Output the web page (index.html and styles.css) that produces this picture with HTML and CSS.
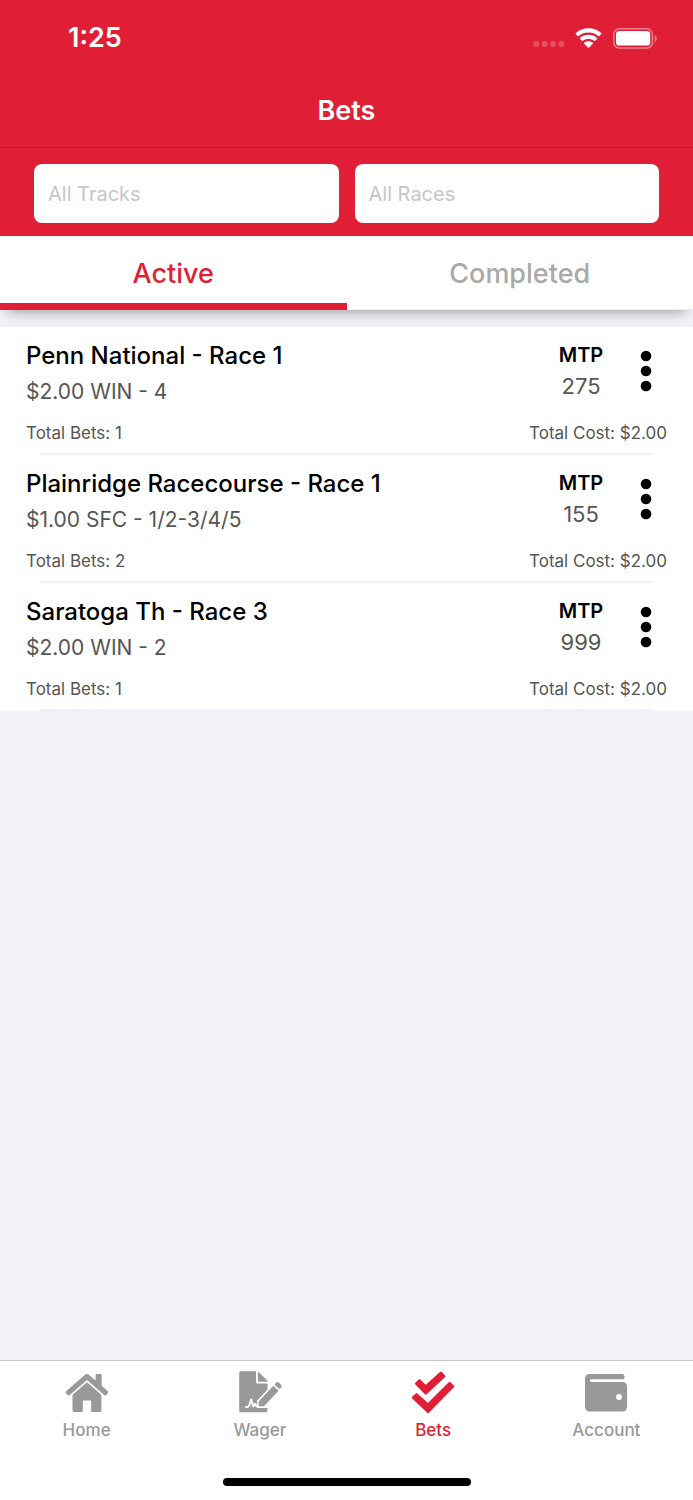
FILE: index.html
```html
<!DOCTYPE html>
<html lang="en">
<head>
<meta charset="utf-8">
<meta name="viewport" content="width=device-width, initial-scale=1">
<title>Bets</title>
<link rel="stylesheet" href="styles.css">
</head>
<body>
<header class="header">
  <div class="status">
    <time class="clock">1:25</time>
    <div class="indicators">
      <svg class="signal" width="32" height="6" viewBox="0 0 32 6" aria-hidden="true"><g fill="#fff" fill-opacity=".22"><rect x="0.500" width="5.500" height="6" rx="1.8"/><rect x="8.900" width="5.500" height="6" rx="1.8"/><rect x="17.300" width="5.500" height="6" rx="1.8"/><rect x="25.700" width="5.500" height="6" rx="1.8"/></g></svg>
      <svg class="wifi" width="27" height="20" viewBox="0 0 27 20" aria-hidden="true"><g fill="#fff"><path d="M13.500 0.300C8.600.300 4.100 2 .800 5a.7.7 0 0 0 0 1L2.800 7.900a.7.7 0 0 0 1 0C6.400 5.700 9.700 4.500 13.500 4.500s7.100 1.200 9.700 3.400a.7.7 0 0 0 1 0l2-1.900a.7.7 0 0 0 0-1C22.900 2 18.400.300 13.500.300z"/><path d="M13.500 6.700c-3.300 0-6.200 1.200-8.500 3.200a.7.7 0 0 0 0 1l1.900 1.900a.7.7 0 0 0 1 0c1.500-1.300 3.400-1.900 5.600-1.900s4.100.6 5.600 1.900a.7.7 0 0 0 1 0l1.900-1.900a.7.7 0 0 0 0-1c-2.300-2-5.200-3.200-8.500-3.200z"/><path d="M13.500 13.300c-1.700 0-3.200.5-4.400 1.500a.7.7 0 0 0 0 1l3.800 3.600c.4.400.8.400 1.200 0l3.800-3.600a.7.7 0 0 0 0-1c-1.200-1-2.700-1.500-4.400-1.500z"/></g></svg>
      <svg class="battery" width="44" height="21" viewBox="0 0 44 21" aria-hidden="true"><rect x=".8" y=".8" width="38.600" height="19.200" rx="5.500" fill="none" stroke="#fff" stroke-opacity=".45" stroke-width="1.500"/><rect x="3" y="3" width="34.200" height="14.600" rx="3.400" fill="#fff"/><path d="M41.800 7v7c2.600-1.300 2.600-5.700 0-7z" fill="#fff" fill-opacity=".5"/></svg>
    </div>
  </div>
  <h1 class="title">Bets</h1>
  <form class="filters">
    <input class="filter" type="text" placeholder="All Tracks" aria-label="Track">
    <input class="filter" type="text" placeholder="All Races" aria-label="Race">
  </form>
</header>
<div class="tabs" role="tablist">
  <button class="tab tab-active" type="button" role="tab" aria-selected="true">Active</button>
  <button class="tab" type="button" role="tab" aria-selected="false">Completed</button>
</div>
<main class="content">
  <ul class="bets">
    <li class="bet">
      <div class="bet-top">
        <div class="bet-info"><h2 class="race">Penn National - Race 1</h2><p class="wager">$2.00 WIN - 4</p></div>
        <div class="mtp"><span class="mtp-label">MTP</span><span class="mtp-value">275</span></div>
        <button class="more" type="button" aria-label="More options"><svg width="12" height="42" viewBox="0 0 12 42"><circle cx="6" cy="6" r="5.300"/><circle cx="6" cy="21" r="5.300"/><circle cx="6" cy="36" r="5.300"/></svg></button>
      </div>
      <div class="totals"><span>Total Bets: 1</span><span>Total Cost: $2.00</span></div>
    </li>
    <li class="bet">
      <div class="bet-top">
        <div class="bet-info"><h2 class="race">Plainridge Racecourse - Race 1</h2><p class="wager">$1.00 SFC - 1/2-3/4/5</p></div>
        <div class="mtp"><span class="mtp-label">MTP</span><span class="mtp-value">155</span></div>
        <button class="more" type="button" aria-label="More options"><svg width="12" height="42" viewBox="0 0 12 42"><circle cx="6" cy="6" r="5.300"/><circle cx="6" cy="21" r="5.300"/><circle cx="6" cy="36" r="5.300"/></svg></button>
      </div>
      <div class="totals"><span>Total Bets: 2</span><span>Total Cost: $2.00</span></div>
    </li>
    <li class="bet">
      <div class="bet-top">
        <div class="bet-info"><h2 class="race">Saratoga Th - Race 3</h2><p class="wager">$2.00 WIN - 2</p></div>
        <div class="mtp"><span class="mtp-label">MTP</span><span class="mtp-value">999</span></div>
        <button class="more" type="button" aria-label="More options"><svg width="12" height="42" viewBox="0 0 12 42"><circle cx="6" cy="6" r="5.300"/><circle cx="6" cy="21" r="5.300"/><circle cx="6" cy="36" r="5.300"/></svg></button>
      </div>
      <div class="totals"><span>Total Bets: 1</span><span>Total Cost: $2.00</span></div>
    </li>
  </ul>
</main>
<footer class="footer">
  <nav class="nav">
    <a class="nav-item" href="#home">
      <svg class="nav-icon" viewBox="0 0 44 44" aria-hidden="true"><path d="M20.300 3.600a2.500 2.500 0 0 1 3.200 0l7.100 6V4.300c0-.8.400-1.200 1.200-1.200h3.700c.8 0 1.200.4 1.200 1.200v10.400l6.100 5.500c.6.600.6 1.200.2 1.800l-1.900 2.200c-.5.500-1.100.5-1.700.1L22 8.900 4.400 24.300c-.6.500-1.200.4-1.700-.1L.9 22c-.5-.6-.4-1.300.2-1.800z"/><path d="M22 11.200l14.400 12.600v15.400c0 1.200-.7 1.900-1.900 1.900h-8.300V30.600c0-.7-.4-1.100-1.100-1.100h-6.200c-.7 0-1.100.4-1.100 1.100v10.500H9.400c-1.200 0-1.900-.7-1.900-1.900V23.800z"/></svg>
      <span>Home</span>
    </a>
    <a class="nav-item" href="#wager">
      <svg class="nav-icon" viewBox="0 0 44 44" aria-hidden="true"><path d="M3 .3h15v10.500c0 1.200.6 1.800 1.800 1.800h9.700v26.900c0 1.200-.6 1.800-1.800 1.800H3c-1.200 0-1.800-.6-1.800-1.800V2.100C1.200.9 1.800.3 3 .3z"/><path d="M19.900.3l9.600 9.500v.9h-9.600z"/><path d="M8 35.900h1.500c1 0 1.400-.5 1.700-1.400l1.900-6 2.200 7 1.700-2.700c.9 2.200 1.900 3.100 4 3.100h8.500" fill="none" stroke="#fff" stroke-width="2" stroke-linecap="round" stroke-linejoin="round"/><path d="M20.700 30.400l14.700-15.600 5.200 4.900L26 35.300h-5.300z" stroke="#fff" stroke-width="3.400" paint-order="stroke"/><path d="M36.400 13.600l1.800-1.900c.7-.8 1.700-.8 2.400-.1l2.500 2.400c.8.700.8 1.700.1 2.400l-1.700 1.900z"/></svg>
      <span>Wager</span>
    </a>
    <a class="nav-item nav-current" href="#bets" aria-current="page">
      <svg class="nav-icon" viewBox="0 0 44 44" aria-hidden="true"><g stroke="currentColor" stroke-width="2.400" stroke-linejoin="round"><path d="M5.200 12.700L8.500 9.400l6.300 6.100L30 1.700l3.300 3.500-18.500 17.200z"/><path d="M2 26.700l3.500-3.400L17 33.700 38.600 12l3.400 3.400L17 41z"/></g></svg>
      <span>Bets</span>
    </a>
    <a class="nav-item" href="#account">
      <svg class="nav-icon" viewBox="0 0 44 44" aria-hidden="true"><path fill-rule="evenodd" d="M5.500 3h32.500c1.500 0 2.500 1.200 2.500 2.800v.8c0 1-.5 1.600-1.400 1.600H7.400c-1 0-1.500.6-1.500 1.400s.5 1.400 1.500 1.400h31.300c2.600 0 4.400 1.900 4.400 4.400v20.500c0 2.600-1.800 4.500-4.400 4.500H5.500c-2.600 0-4.500-1.900-4.500-4.500V7.500C1 5 2.900 3 5.500 3zM35 23.100a2.900 2.900 0 1 0 0 5.800 2.900 2.900 0 0 0 0-5.800z"/></svg>
      <span>Account</span>
    </a>
  </nav>
  <div class="home-bar"></div>
</footer>
</body>
</html>
```
FILE: styles.css
```css
* { box-sizing: border-box; }
body {
  margin: 0;
  min-height: 100vh;
  display: flex;
  flex-direction: column;
  background: #f2f1f7;
  color: #000;
  font-family: Inter, "Liberation Sans", sans-serif;
}
h1, h2, p, ul { margin: 0; padding: 0; }
button, input { font: inherit; }
.header { background: #e01e35; color: #fff; }
.status {
  display: flex;
  justify-content: space-between;
  align-items: center;
  height: 76px;
  padding: 0 36px 0 68px;
}
.clock { font-size: 27px; font-weight: 600; line-height: 32px; }
.indicators { display: flex; align-items: center; gap: 10px; }
.signal { margin-top: 12px; }
.battery { margin-left: 1px; }
.title {
  height: 72px;
  border-bottom: 1px solid #c51d32;
  font-size: 27px;
  font-weight: 600;
  line-height: 70px;
  text-align: center;
}
.filters { display: flex; gap: 16px; padding: 16px 34px 13px; }
.filter {
  flex: 1;
  min-width: 0;
  height: 59px;
  padding: 0 14px;
  border: 0;
  border-radius: 8px;
  background: #fff;
  font-size: 20px;
}
.filter::placeholder { color: #c6c6c8; opacity: 1; }
.tabs {
  display: flex;
  position: relative;
  background: #fff;
  box-shadow: 0 10px 12px -8px rgba(0, 0, 0, .35);
}
.tab {
  flex: 1;
  height: 74px;
  padding: 2px 0 0;
  border: 0;
  border-bottom: 1px solid #ececf2;
  background: #fff;
  color: #a9a9a9;
  font-size: 27px;
  font-weight: 500;
}
.tab-active { border-bottom: 7px solid #e01e35; padding-top: 8px; color: #e01e35; }
.content { flex: 1; padding-top: 17px; }
.bets { list-style: none; background: #fff; }
.bet { padding: 12px 26px 0; }
.bet::after {
  content: "";
  display: block;
  height: 2px;
  margin: 4px 14px 0;
  background: #f2f1f7;
}
.bet-top { display: flex; align-items: flex-start; }
.bet-info { flex: 1; }
.race { font-size: 24px; font-weight: 500; line-height: 34px; }
.wager { color: #555; font-size: 21px; line-height: 38px; }
.mtp { display: flex; flex-direction: column; align-items: center; width: 60px; }
.mtp-label { font-size: 20px; font-weight: 600; line-height: 32px; }
.mtp-value { color: #555; font-size: 22px; line-height: 30px; }
.more { margin: 11px 15px 0 29px; padding: 0; border: 0; background: none; line-height: 0; }
.totals { display: flex; justify-content: space-between; padding-top: 6px; color: #555; font-size: 17px; line-height: 32px; }
.footer { border-top: 1px solid #c6c5cc; background: #fff; }
.nav { display: flex; padding: 10px 0 37px; }
.nav-item {
  flex: 1;
  display: flex;
  flex-direction: column;
  align-items: center;
  gap: 4px;
  color: #999;
  font-size: 17px;
  font-weight: 500;
  line-height: 22px;
  text-decoration: none;
}
.nav-icon { width: 44px; height: 44px; fill: currentColor; }
.nav-current { color: #e01e35; }
.home-bar { width: 248px; height: 8px; margin: 0 auto 14px; border-radius: 4px; background: #000; }
```
